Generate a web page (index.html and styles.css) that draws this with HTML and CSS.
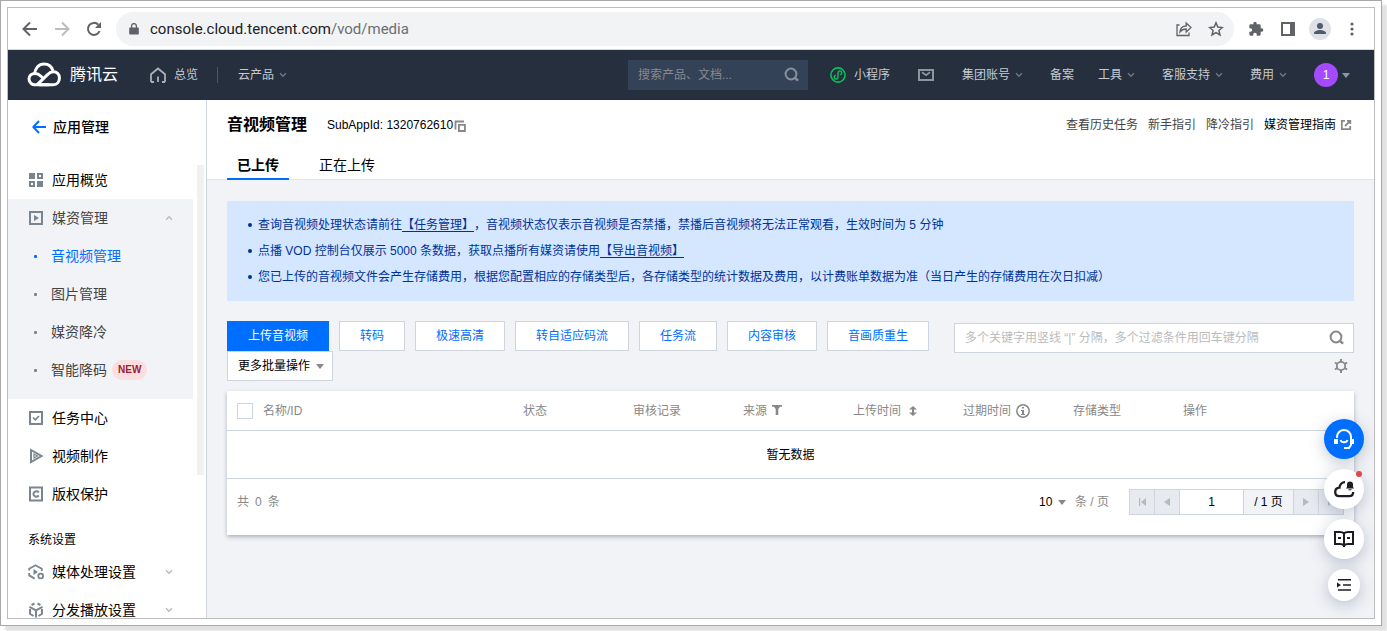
FILE: index.html
```html
<!DOCTYPE html>
<html lang="zh-CN">
<head>
<meta charset="utf-8">
<title>音视频管理</title>
<link rel="stylesheet" href="styles.css">
</head>
<body>
<svg class="defs" aria-hidden="true">
  <symbol id="chev" viewBox="0 0 8 6"><path d="M1 1.2l3 3 3-3" fill="none" stroke="currentColor" stroke-width="1.4"/></symbol>
  <symbol id="caret" viewBox="0 0 8 5"><path d="M0 0h8l-4 5z" fill="currentColor"/></symbol>
  <symbol id="search" viewBox="0 0 16 16"><circle cx="7" cy="7" r="5.4" fill="none" stroke="currentColor" stroke-width="2"/><path d="M10.5 10.5l3.6 3.2" stroke="currentColor" stroke-width="2.4"/></symbol>
</svg>
<div class="frame">
<div class="window">
  <div class="browser">
    <button class="bbtn" aria-label="后退"><svg width="16" height="16" viewBox="0 0 16 16" fill="none" stroke="#5f6368" stroke-width="2"><path d="M15 8H2M8 1.5L1.5 8 8 14.5"/></svg></button>
    <button class="bbtn" aria-label="前进"><svg width="16" height="16" viewBox="0 0 16 16" fill="none" stroke="#babcbe" stroke-width="2"><path d="M1 8h13M8 1.500L14.500 8 8 14.500"/></svg></button>
    <button class="bbtn" aria-label="刷新"><svg width="16" height="16" viewBox="0 0 16 16" fill="none" stroke="#5f6368" stroke-width="2"><path d="M13.600 10A6 6 0 1 1 12.300 3.700"/><path d="M15 1v6H9z" fill="#5f6368" stroke="none"/></svg></button>
    <div class="url">
      <svg width="10" height="12" viewBox="0 0 10 12"><path d="M1 4.500h8a.8.8 0 0 1 .8.8v5.500a.8.8 0 0 1-.8.8H1a.8.8 0 0 1-.8-.8V5.300a.8.8 0 0 1 .8-.8z" fill="#5f6368"/><path d="M2.600 5V3a2.400 2.400 0 0 1 4.800 0v2" fill="none" stroke="#5f6368" stroke-width="1.300"/></svg>
      <span class="addr"><b>console.cloud.tencent.com</b>/vod/media</span>
      <button class="bbtn" aria-label="分享"><svg width="16" height="16" viewBox="0 0 16 16" fill="none" stroke="#5f6368" stroke-width="1.300"><path d="M3.500 4H1v10.500h12v-3"/><path d="M4 11c.3-4 2.500-6 6.200-6V2l4.800 4.500-4.800 4.500V8C7.500 8 5.500 8.800 4 11z"/></svg></button>
      <button class="bbtn" aria-label="收藏"><svg width="16" height="16" viewBox="0 0 16 16" fill="none" stroke="#5f6368" stroke-width="1.500"><path d="M8 1.800l1.800 4.300 4.600.4-3.500 3 1.100 4.500L8 11.600 4 14l1.100-4.500-3.500-3 4.600-.4z"/></svg></button>
    </div>
    <button class="bbtn" aria-label="扩展"><svg width="16" height="16" viewBox="0 0 24 24" fill="#5f6368"><path d="M20.500 11H19V7a2 2 0 0 0-2-2h-4V3.500a2.500 2.500 0 0 0-5 0V5H4a2 2 0 0 0-2 2v3.800h1.500a2.700 2.700 0 0 1 0 5.400H2V20a2 2 0 0 0 2 2h3.800v-1.500a2.700 2.700 0 0 1 5.400 0V22H17a2 2 0 0 0 2-2v-4h1.500a2.500 2.500 0 0 0 0-5z"/></svg></button>
    <button class="bbtn" aria-label="侧边栏"><svg width="14" height="14" viewBox="0 0 14 14"><path fill="#5f6368" fill-rule="evenodd" d="M0 0h14v14H0zM2 2v10h7V2z"/></svg></button>
    <button class="bbtn user" aria-label="用户"><svg width="22" height="22" viewBox="0 0 22 22"><circle cx="11" cy="11" r="11" fill="#dee1e6"/><circle cx="11" cy="8" r="3" fill="#4f5b6e"/><path d="M5 16v-1c0-2 4-3 6-3s6 1 6 3v1z" fill="#4f5b6e"/></svg></button>
    <button class="bbtn" aria-label="菜单"><svg width="4" height="14" viewBox="0 0 4 14" fill="#5f6368"><circle cx="2" cy="2" r="1.600"/><circle cx="2" cy="7" r="1.600"/><circle cx="2" cy="12" r="1.600"/></svg></button>
  </div>

  <header class="top">
    <a class="logo" href="#"><svg width="34" height="26" viewBox="0 0 34 26" fill="none" stroke="#fff" stroke-width="3"><path d="M7.500 12.200C8 6 12 2 17 2c4.500 0 7.800 2.800 9 6.800"/><path d="M22 22.800H8.500A6 6 0 0 1 2 17c0-3.500 2.800-5.500 6-5.500 2.500 0 4.200 1 6 2.800l2 2"/><path d="M10 22.800L20.500 12.600c1.800-1.800 3.500-2.900 5.800-2.900a6 6 0 0 1 6.100 6.500c0 3.600-2.400 6.600-6 6.600H12"/></svg><span>腾讯云</span></a>
    <a class="home" href="#"><svg width="16" height="16" viewBox="0 0 16 16" fill="none" stroke="#a9afb8" stroke-width="1.800"><path d="M1 15V7.200L8 1.500l7 5.700V15"/><path d="M4 15h-3M12 15h3M8 9.500V15"/></svg><span>总览</span></a>
    <i class="sep"></i>
    <a class="drop" href="#">云产品<svg><use href="#chev"/></svg></a>
    <label class="tsearch"><input type="text" placeholder="搜索产品、文档..." aria-label="搜索产品、文档"><svg width="16" height="16"><use href="#search"/></svg></label>
    <a class="mini" href="#"><svg width="16" height="16" viewBox="0 0 16 16" fill="none" stroke="#0abf5b"><circle cx="8" cy="8" r="7.100" stroke-width="1.600"/><path d="M8 10.200V5.800a1.900 1.900 0 1 1 2.200 1.900M8 5.800v4.400a1.900 1.900 0 1 1-2.200-1.900" stroke-width="1.400"/></svg>小程序</a>
    <a class="mail" href="#" aria-label="消息"><svg width="16" height="12" viewBox="0 0 16 12" fill="none" stroke="#8d959e" stroke-width="2"><path d="M1 1h14v10H1z"/><path stroke-width="1.700" d="M4 3.200l4 3 4-3"/></svg></a>
    <nav class="tnav">
      <a class="drop" href="#">集团账号<svg><use href="#chev"/></svg></a>
      <a href="#">备案</a>
      <a class="drop" href="#">工具<svg><use href="#chev"/></svg></a>
      <a class="drop" href="#">客服支持<svg><use href="#chev"/></svg></a>
      <a class="drop" href="#">费用<svg><use href="#chev"/></svg></a>
      <button class="account"><span>1</span><svg width="8" height="5"><use href="#caret"/></svg></button>
    </nav>
  </header>

  <div class="body">
    <aside class="side">
      <a class="back" href="#"><svg width="14" height="14" viewBox="0 0 14 14" fill="none" stroke="#006eff" stroke-width="2"><path d="M14 7H1.500M7 1L1.300 7 7 13"/></svg>应用管理</a>
      <div class="scroll">
        <nav class="menu">
          <a href="#"><svg viewBox="0 0 16 16"><path fill="#7b858f" fill-rule="evenodd" d="M1 1h6v6H1zM9 1h6v6H9zM11 3v2h2V3zM1 9h6v6H1zM3 11v2h2v-2zM9 9h6v6H9z"/></svg>应用概览</a>
          <div class="group">
            <a href="#"><svg viewBox="0 0 16 16"><path fill="none" stroke="#7b858f" stroke-width="2" d="M2 2h12v12H2z"/><path fill="#7b858f" d="M6 5l5 3-5 3z"/></svg>媒资管理<svg class="tog up"><use href="#chev"/></svg></a>
            <a class="sub on" href="#">音视频管理</a>
            <a class="sub" href="#">图片管理</a>
            <a class="sub" href="#">媒资降冷</a>
            <a class="sub" href="#">智能降码<em>NEW</em></a>
          </div>
          <a href="#"><svg viewBox="0 0 16 16" fill="none" stroke="#7b858f"><path stroke-width="2" d="M5 2H2v12h12V2h-3M5 2h6"/><path stroke-width="1.700" d="M5 7.500l2.300 2.300L11 6"/></svg>任务中心</a>
          <a href="#"><svg viewBox="0 0 16 16" fill="none" stroke="#7b858f"><path stroke-width="2" d="M3 2l10.500 6L3 14z"/><path stroke-width="1.200" d="M6 6l3.500 2L6 10z"/></svg>视频制作</a>
          <a href="#"><svg viewBox="0 0 16 16" fill="none" stroke="#7b858f" stroke-width="2"><path d="M2 1.500h12v13H2z"/><path d="M10.800 6.500C9 4.400 5.400 5.500 5.400 8s3.600 3.600 5.400 1.500"/></svg>版权保护</a>
          <h2>系统设置</h2>
          <a href="#"><svg viewBox="0 0 16 16" fill="none" stroke="#7b858f" stroke-width="1.800"><path d="M1.200 6.500V4.800L7.500 1.200l6.300 3.600V7M1.200 9v2.400l5.500 3.200"/><path fill="#7b858f" stroke="none" d="M5.500 5l4.500 3-4.500 3z"/><circle cx="12.700" cy="12" r="2.400"/></svg>媒体处理设置<svg class="tog"><use href="#chev"/></svg></a>
          <a href="#"><svg viewBox="0 0 16 16" fill="none" stroke="#7b858f" stroke-width="2"><path d="M3.500 3L6.500 1.500M9.500 1.500l3 1.500M1.500 4.800L8 8.300l6.500-3.500M8 8v7.500M2 7v4.800l3.500 2.200M14 7v4.800l-3.500 2.200"/></svg>分发播放设置<svg class="tog"><use href="#chev"/></svg></a>
        </nav>
        <i class="bar"></i>
      </div>
    </aside>

    <main class="main">
      <div class="head">
        <div class="title">
          <h1>音视频管理</h1>
          <span class="appid">SubAppId: 1320762610</span>
          <button class="copy" aria-label="复制"><svg width="12" height="12" viewBox="0 0 12 12" fill="none" stroke="#888" stroke-width="1.800"><path d="M1.500 9.500V1.500H10"/><path d="M4.900 4.900h6v6.100h-6z"/></svg></button>
          <nav class="links">
            <a href="#">查看历史任务</a><a href="#">新手指引</a><a href="#">降冷指引</a>
            <a class="ext" href="#">媒资管理指南<svg width="12" height="12" viewBox="0 0 12 12" fill="none" stroke="#888" stroke-width="1.800"><path d="M5 1.800H1.800v8.400h8.400V7M7 1.800h3.300V5M10.200 1.800L5 7"/></svg></a>
          </nav>
        </div>
        <div class="tabs" role="tablist">
          <button role="tab" class="on" aria-selected="true">已上传</button>
          <button role="tab">正在上传</button>
        </div>
      </div>

      <div class="content">
        <ul class="alert">
          <li>查询音视频处理状态请前往<a href="#">【任务管理】</a>，音视频状态仅表示音视频是否禁播，禁播后音视频将无法正常观看，生效时间为 5 分钟</li>
          <li>点播 VOD 控制台仅展示 5000 条数据，获取点播所有媒资请使用<a href="#">【导出音视频】</a></li>
          <li>您已上传的音视频文件会产生存储费用，根据您配置相应的存储类型后，各存储类型的统计数据及费用，以计费账单数据为准（当日产生的存储费用在次日扣减）</li>
        </ul>

        <div class="tools">
          <div class="acts">
            <button class="primary">上传音视频</button><button>转码</button><button>极速高清</button><button>转自适应码流</button><button>任务流</button><button>内容审核</button><button>音画质重生</button>
            <button class="more">更多批量操作<svg width="8" height="5"><use href="#caret"/></svg></button>
          </div>
          <div class="filter">
            <label class="fsearch"><input type="text" placeholder="多个关键字用竖线 “|” 分隔，多个过滤条件用回车键分隔" aria-label="过滤"><svg width="16" height="16"><use href="#search"/></svg></label>
            <button class="gear" aria-label="设置"><svg width="14" height="14" viewBox="0 0 14 14" fill="none" stroke="#888"><circle cx="7" cy="7" r="4.200" stroke-width="1.800"/><path stroke-width="2" d="M7 0v3M7 11v3M.9 3.500L3.500 5M10.500 9l2.600 1.500M.9 10.500L3.500 9M10.500 5l2.600-1.500"/></svg></button>
          </div>
        </div>

        <section class="card">
          <table>
            <colgroup><col class="c0"><col><col class="c1"><col class="c1"><col class="c1"><col class="c1"><col class="c1"><col class="c1"><col class="c2"></colgroup>
            <thead><tr>
              <th class="ck"><input type="checkbox" aria-label="全选"></th><th>名称/ID</th><th>状态</th><th>审核记录</th>
              <th>来源<svg width="10" height="10" viewBox="0 0 10 10"><path d="M0 0h10v1.800H8L6.300 4v6H3.700V4L2 1.800H0z" fill="#888"/></svg></th>
              <th>上传时间<svg class="wide" width="8" height="10" viewBox="0 0 8 10"><path d="M4 0l4 3.600H5v2.800h3L4 10 0 6.400h3V3.600H0z" fill="#888"/></svg></th>
              <th>过期时间<svg class="info" width="14" height="14" viewBox="0 0 14 14"><circle cx="7" cy="7" r="6.200" fill="none" stroke="#888" stroke-width="1.500"/><path d="M6 3h2v1.600H6zM5 6h3v4h1v1H5v-1h1V7H5z" fill="#888"/></svg></th>
              <th>存储类型</th><th>操作</th>
            </tr></thead>
            <tbody><tr><td colspan="9">暂无数据</td></tr></tbody>
          </table>
          <div class="foot">
            <span class="total">共&ensp;0&ensp;条</span>
            <label class="size"><select><option>10</option></select><svg width="8" height="5"><use href="#caret"/></svg><span>条 / 页</span></label>
            <div class="pager">
              <button aria-label="首页"><svg width="7" height="8" viewBox="0 0 7 8"><path d="M0 0h1.200v8H0zM7 0v8L2 4z" fill="#b4b9c2"/></svg></button>
              <button aria-label="上一页"><svg width="6" height="8" viewBox="0 0 6 8"><path d="M6 0v8L0 4z" fill="#b4b9c2"/></svg></button>
              <input type="text" value="1" aria-label="页码">
              <span>/ 1 页</span>
              <button aria-label="下一页"><svg width="6" height="8" viewBox="0 0 6 8"><path d="M0 0v8l6-4z" fill="#b4b9c2"/></svg></button>
              <button aria-label="末页"><svg width="7" height="8" viewBox="0 0 7 8"><path d="M5.800 0H7v8H5.800zM0 0v8l5-4z" fill="#b4b9c2"/></svg></button>
            </div>
          </div>
        </section>
      </div>

      <div class="float">
        <button class="blue" aria-label="客服"><svg width="20" height="20" viewBox="0 0 20 20" fill="none" stroke="#fff" stroke-width="2"><path d="M3 9V8a7 7 0 0 1 14 0v8l-2 3h-5"/><path d="M0 10h4v5H0zM16 10h4v5h-4z" fill="#fff" stroke="none"/><path d="M6.500 11c1 3 6 3 7 0"/></svg></button>
        <button class="dot" aria-label="消息"><svg width="22" height="20" viewBox="0 0 22 20"><path d="M12 3.200A5.500 5.500 0 0 0 6.500 8.600C3.800 8.800 2.200 10.500 2.200 13c0 2.600 1.700 4.200 4 4.200h10c2.600 0 4-1.400 4-4.200" fill="none" stroke="#1b1d21" stroke-width="2.300"/><path d="M14 5.500a3 3 0 0 1 6 0V8l1 1.500h-8L14 8zM15.500 10.300h3v1h-3z" fill="#1b1d21"/></svg></button>
        <button aria-label="文档"><svg width="20" height="18" viewBox="0 0 20 18" fill="none" stroke="#1b1d21" stroke-width="2"><path d="M10 3.500C9 2.300 7.500 2 6 2H1v12h5c1.500 0 3 .3 4 1.500 1-1.200 2.500-1.500 4-1.500h5V2h-5c-1.500 0-3 .3-4 1.500zV17M4 8h3M13 8h3"/></svg></button>
        <button class="small" aria-label="展开"><svg width="14" height="12" viewBox="0 0 14 12"><path d="M1 0h13v1.500H1zM6 5.200h8v1.500H6zM1 10.300h13v1.500H1zM0 3.500L4 6 0 8.500z" fill="#1b1d21"/></svg></button>
      </div>
    </main>
  </div>
</div>
</div>
</body>
</html>
```

FILE: styles.css
```css
* { box-sizing: border-box; }
html, body { height: 100%; margin: 0; }
body {
  background: #fff; color: #000; overflow: hidden;
  font: 12px/18px "Liberation Sans", "Noto Sans CJK SC", sans-serif;
  padding: 0 5px 5px 0;
}
a { color: inherit; text-decoration: none; }
button, input, select { font: inherit; color: inherit; border: 0; padding: 0; margin: 0; background: none; outline: 0; }
svg { flex: none; display: block; }
h1, h2, ul { margin: 0; padding: 0; }
.defs { position: absolute; width: 0; height: 0; }

.frame { height: 100%; padding: 6px; border: 1px solid #a8a8a8; box-shadow: 5px 5px 2px #e2e2e2; }
.window { height: 100%; border: 1px solid #bdbdbd; display: flex; flex-direction: column; overflow: hidden; }

/* browser bar */
.browser { display: flex; align-items: center; height: 42px; flex: none; padding: 0 14px; gap: 16px; border-bottom: 1px solid #d5d8dc; }
.bbtn { display: flex; align-items: center; justify-content: center; width: 16px; height: 24px; }
.user { width: 22px; margin: 0 -3px; }
.url { flex: 1; height: 34px; display: flex; align-items: center; gap: 16px; padding: 0 10px 0 13px; border-radius: 17px; background: #f1f3f4; margin: 0 -2px; }
.url > svg { margin-right: -5px; }
.addr { flex: 1; font: 15px/20px Roboto, sans-serif; color: #6b6f73; }
.addr b { font-weight: 400; color: #202124; }

/* console header */
.top { display: flex; align-items: center; flex: none; height: 50px; padding: 0 24px 0 19px; background: #262f3e; color: #c5cad1; }
.logo { display: flex; align-items: center; gap: 9px; color: #fff; font-size: 16px; line-height: 24px; }
.home { display: flex; align-items: center; gap: 8px; margin-left: 32px; }
.sep { width: 1px; height: 16px; background: #4b5462; margin: 0 20px 0 19px; }
.drop { display: flex; align-items: center; }
.drop svg { width: 8px; height: 6px; margin: 0 3px 0 5px; color: #6f7783; }
.tsearch { display: flex; align-items: center; width: 180px; height: 30px; padding: 0 8px 0 10px; margin-left: auto; background: #344258; color: #87909b; }
.tsearch input { flex: 1; min-width: 0; }
.tsearch input::placeholder { color: #87898d; opacity: 1; }
.mini { display: flex; align-items: center; gap: 8px; margin-left: 22px; }
.mail { margin: 0 28px; }
.tnav { display: flex; align-items: center; gap: 24px; }
.account { display: flex; align-items: center; gap: 4px; color: #8d959e; }
.account span { width: 24px; height: 24px; border-radius: 50%; background: #a54bff; color: #fff; line-height: 24px; }

.body { display: flex; flex: 1; min-height: 0; }

/* sidebar */
.side { width: 199px; flex: none; border-right: 1px solid #cfd5de; font-size: 14px; display: flex; flex-direction: column; }
.back { display: flex; align-items: center; gap: 7px; height: 54px; flex: none; padding-left: 24px; font-weight: 500; }
.scroll { display: flex; justify-content: space-between; align-items: flex-start; padding: 7px 2px 0 0; min-height: 0; overflow: hidden; }
.menu { flex: none; width: 185px; }
.menu a { display: flex; align-items: center; gap: 8px; height: 38px; padding: 0 20px; }
.menu a > svg { width: 16px; height: 16px; }
.menu a > .tog { width: 8px; height: 6px; margin-left: auto; color: #b6bcc4; }
.menu a > .up { transform: rotate(180deg); }
.menu .group { background: #f2f3f7; color: #444; padding-bottom: 10px; }
.menu .sub { gap: 0; padding-left: 26px; }
.sub::before { content: ""; width: 3px; height: 3px; border-radius: 1px; background: #7b858f; margin-right: 14px; }
.sub.on { color: #006eff; }
.sub.on::before { background: #006eff; }
.sub em { margin-left: 5px; padding: 0 6px; border-radius: 10px; background: #fbdfe0; color: #9c1c33; font: bold 10px/20px "Liberation Sans", sans-serif; }
.menu h2 { font-size: 12px; line-height: 18px; font-weight: 400; padding: 18px 20px 4px; }
.bar { width: 7px; height: 310px; margin-top: 4px; background: #f1f1f1; }

/* main */
.main { position: relative; flex: 1; min-width: 0; background: #f2f3f7; }
.head { background: #fff; border-bottom: 1px solid #e3e6ec; padding: 0 20px; }
.title { display: flex; align-items: center; height: 50px; }
h1 { font-size: 16px; line-height: 24px; font-weight: 700; margin-right: 20px; }
.copy { padding: 2px 0 0 1px; }
.links { display: flex; gap: 10px; margin-left: auto; color: #444; }
.ext { display: flex; align-items: center; gap: 4px; color: #000; margin-right: 2px; }
.tabs { display: flex; gap: 20px; margin-bottom: -1px; }
.tabs button { height: 30px; padding: 2px 10px 0; font-size: 14px; border-bottom: 2px solid transparent; }
.tabs .on { font-weight: 700; border-color: #006eff; }

.content { padding: 21px 20px 0; }
.alert { list-style: none; padding: 11px 20px; background: #d5e7ff; color: #003199; line-height: 26px; }
.alert li { display: flex; align-items: center; }
.alert li::before { content: ""; width: 4px; height: 4px; border-radius: 50%; background: #003199; margin: 0 6px 0 1px; }
.alert a { text-decoration: underline; text-underline-offset: 2px; }

.tools { display: flex; gap: 16px; margin: 20px 0 10px; }
.acts { display: flex; flex: 1; flex-wrap: wrap; gap: 0 10px; }
.acts button { height: 30px; padding: 0 20px; border: 1px solid #cfd5de; background: #fff; color: #006eff; }
.acts .primary { background: #006eff; border-color: #006eff; color: #fff; }
.acts .more { display: flex; align-items: center; gap: 6px; padding: 0 8px 0 10px; color: #000; }
.more svg, .size svg { color: #888; }
.filter { width: 400px; padding-top: 2px; display: flex; flex-direction: column; align-items: flex-end; }
.fsearch { display: flex; align-items: center; width: 100%; height: 30px; border: 1px solid #cfd5de; background: #fff; padding: 0 8px 0 10px; color: #888; }
.fsearch input { flex: 1; min-width: 0; }
.fsearch input::placeholder { color: #bbb; opacity: 1; }
.gear { margin: 6px 6px 0 0; }

.card { background: #fff; box-shadow: 0 2px 4px rgba(54, 58, 80, .35); }
table { width: 100%; border-collapse: separate; border-spacing: 0; table-layout: fixed; }
.c0 { width: 26px; } .c1 { width: 110px; } .c2 { width: 181px; }
th { height: 40px; padding: 0 10px; text-align: left; font-weight: 400; color: #888; border-bottom: 1px solid #cfd5de; white-space: nowrap; }
th svg { display: inline-block; margin-left: 5px; vertical-align: 0; }
th .wide { margin-left: 8px; vertical-align: -1px; }
th .info { vertical-align: -3px; }
th.ck { padding: 0 0 0 10px; }
th input { appearance: none; display: block; width: 16px; height: 16px; border: 1px solid #cfd5de; background: #fff; }
td { height: 48px; padding: 0; text-align: center; border-bottom: 1px solid #cfd5de; }
.foot { display: flex; align-items: center; padding: 10px 10px 20px; color: #888; }
.size { display: flex; align-items: center; margin-left: auto; }
.size select { appearance: none; width: 14px; color: #000; margin-right: 5px; }
.size span { margin: 0 20px 0 9px; }
.pager { display: flex; border: 1px solid #cfd5de; color: #000; text-align: center; }
.pager > * { height: 24px; line-height: 24px; border-left: 1px solid #cfd5de; }
.pager button { display: flex; align-items: center; justify-content: center; width: 25px; background: #e7eaef; }
.pager > :first-child { border-left: 0; width: 24px; }
.pager input { width: 64px; text-align: center; background: #fff; }
.pager span { width: 50px; background: #f2f3f7; }

.float { position: absolute; right: 10px; bottom: 17px; display: flex; flex-direction: column; align-items: center; gap: 10px; }
.float button { position: relative; display: flex; align-items: center; justify-content: center; width: 40px; height: 40px; border-radius: 50%; background: #fff; box-shadow: 0 4px 16px rgba(55, 72, 110, .3); }
.float .blue { background: #006eff; }
.float .small { width: 32px; height: 32px; }
.dot::after { content: ""; position: absolute; right: 2px; top: 2px; width: 6px; height: 6px; border-radius: 50%; background: #e54545; }
```
